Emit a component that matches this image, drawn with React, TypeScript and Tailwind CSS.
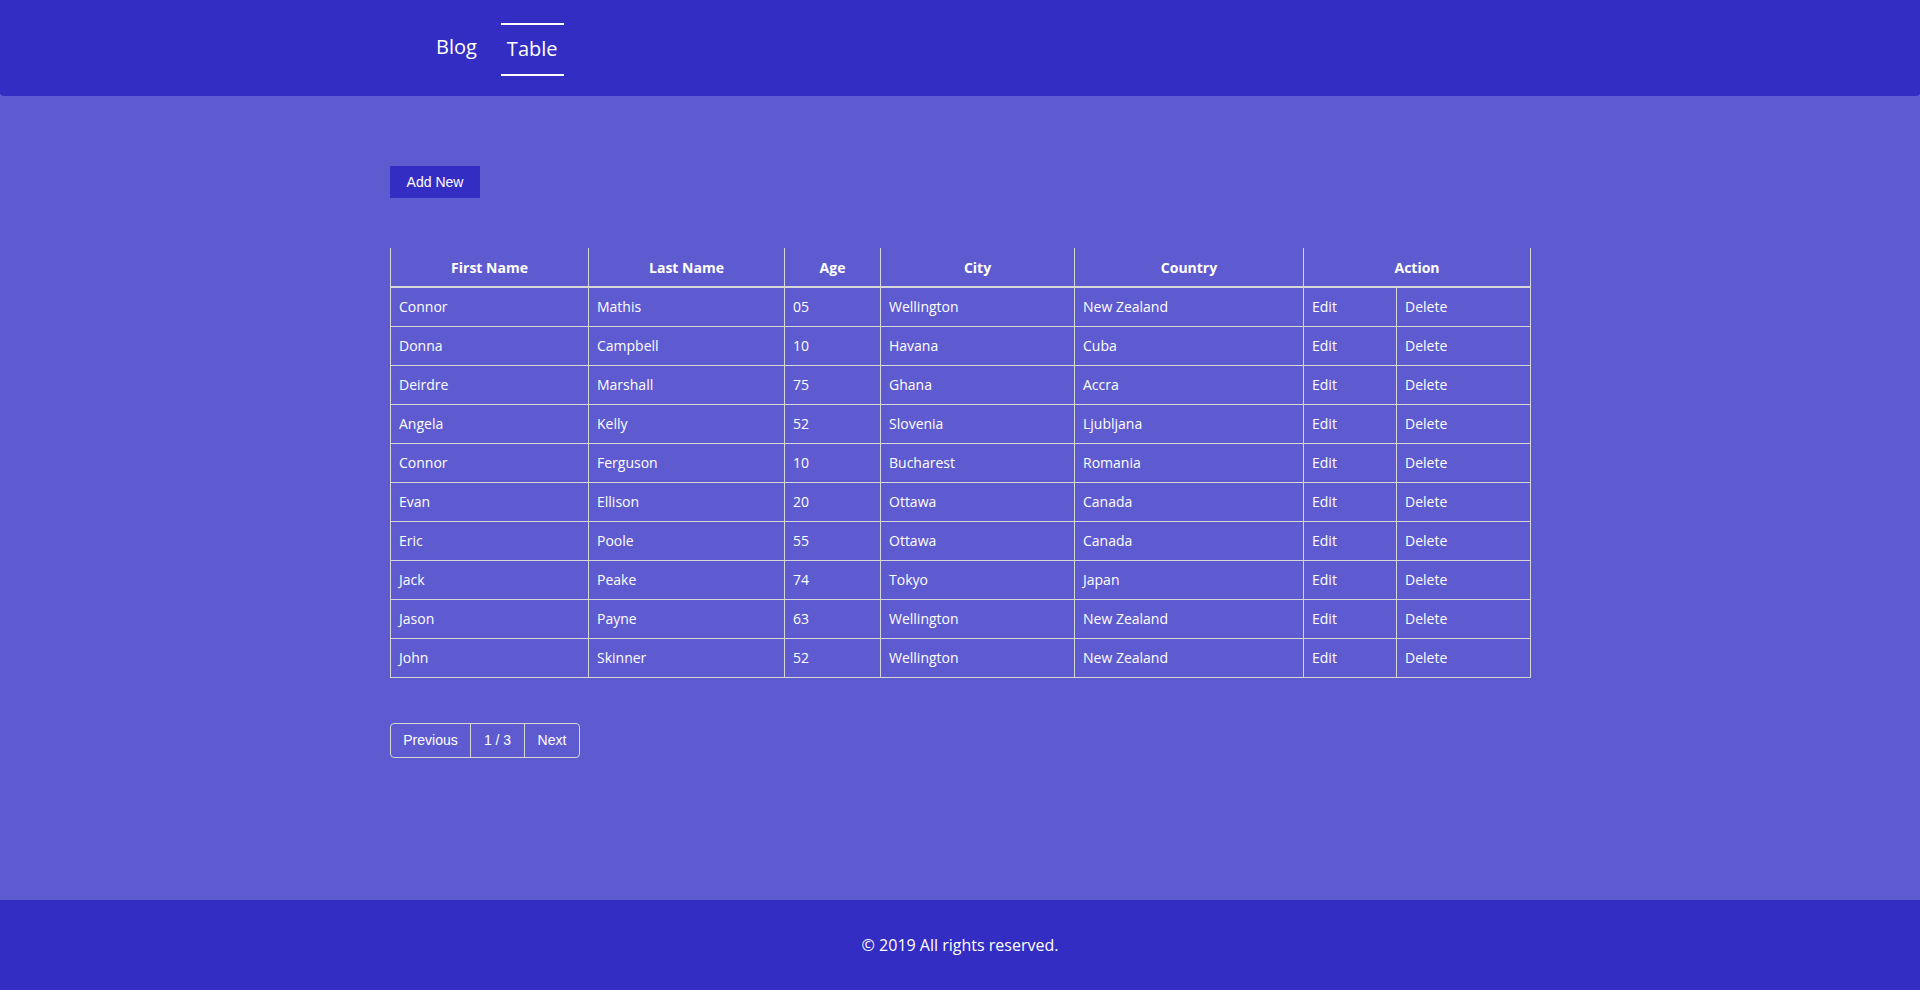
import React from 'react';

// Rows shown on the first page of the people table
interface Person {
  firstName: string;
  lastName: string;
  age: string;
  city: string;
  country: string;
}

const people: Person[] = [
  { firstName: 'Connor', lastName: 'Mathis', age: '05', city: 'Wellington', country: 'New Zealand' },
  { firstName: 'Donna', lastName: 'Campbell', age: '10', city: 'Havana', country: 'Cuba' },
  { firstName: 'Deirdre', lastName: 'Marshall', age: '75', city: 'Ghana', country: 'Accra' },
  { firstName: 'Angela', lastName: 'Kelly', age: '52', city: 'Slovenia', country: 'Ljubljana' },
  { firstName: 'Connor', lastName: 'Ferguson', age: '10', city: 'Bucharest', country: 'Romania' },
  { firstName: 'Evan', lastName: 'Ellison', age: '20', city: 'Ottawa', country: 'Canada' },
  { firstName: 'Eric', lastName: 'Poole', age: '55', city: 'Ottawa', country: 'Canada' },
  { firstName: 'Jack', lastName: 'Peake', age: '74', city: 'Tokyo', country: 'Japan' },
  { firstName: 'Jason', lastName: 'Payne', age: '63', city: 'Wellington', country: 'New Zealand' },
  { firstName: 'John', lastName: 'Skinner', age: '52', city: 'Wellington', country: 'New Zealand' },
];

const headers = ['First Name', 'Last Name', 'Age', 'City', 'Country'];

const Header: React.FC = () => (
  <header className="h-[96px] bg-[#342dc3] rounded-b-[4px] flex items-center">
    <nav className="flex items-center ml-[436px] gap-[24px] text-white text-[20px] font-['Open_Sans',sans-serif]">
      <a className="pb-[3px]">Blog</a>
      <a className="h-[53px] px-[6px] flex items-center border-y-2 border-white mt-[2px]">Table</a>
    </nav>
  </header>
);

const PeopleTable: React.FC = () => (
  <table className="w-[1140px] table-fixed border-collapse text-white text-[14px] font-['Open_Sans',sans-serif]">
    <colgroup>
      <col className="w-[198px]" />
      <col className="w-[196px]" />
      <col className="w-[96px]" />
      <col className="w-[194px]" />
      <col className="w-[229px]" />
      <col className="w-[93px]" />
      <col className="w-[134px]" />
    </colgroup>
    <thead>
      <tr>
        {headers.map((h) => (
          <th key={h} className="h-[39px] font-bold text-center border-x border-b-2 border-[#d6d6d6] p-0">
            {h}
          </th>
        ))}
        <th colSpan={2} className="h-[39px] font-bold text-center border-x border-b-2 border-[#d6d6d6] p-0">
          Action
        </th>
      </tr>
    </thead>
    <tbody>
      {people.map((p, i) => (
        <tr key={i}>
          {[p.firstName, p.lastName, p.age, p.city, p.country, 'Edit', 'Delete'].map((v, j) => (
            <td key={j} className="h-[39px] px-[8px] py-0 border border-[#d6d6d6] text-left">
              {v}
            </td>
          ))}
        </tr>
      ))}
    </tbody>
  </table>
);

const Pagination: React.FC = () => (
  <div className="flex w-max border border-[#d6d6d6] rounded-[4px] text-white text-[14px] font-['Liberation_Sans',sans-serif]">
    <button className="h-[33px] w-[80px] flex items-center justify-center border-r border-[#d6d6d6]">Previous</button>
    <span className="h-[33px] w-[54px] flex items-center justify-center border-r border-[#d6d6d6]">1 / 3</span>
    <button className="h-[33px] w-[54px] flex items-center justify-center">Next</button>
  </div>
);

export default function App() {
  return (
    <div className="min-h-[990px] flex flex-col bg-[#5e5bd1]">
      <Header />
      <main className="h-[804px] w-[1140px] mx-auto pt-[70px]">
        <button className="h-[32px] w-[90px] bg-[#342dc3] text-white text-[14px] font-['Liberation_Sans',sans-serif]">
          Add New
        </button>
        <div className="mt-[50px]">
          <PeopleTable />
        </div>
        <div className="mt-[45px]">
          <Pagination />
        </div>
      </main>
      <footer className="h-[90px] bg-[#342dc3] flex items-center justify-center text-white text-[16px] font-['Open_Sans',sans-serif]">
        © 2019 All rights reserved.
      </footer>
    </div>
  );
}
